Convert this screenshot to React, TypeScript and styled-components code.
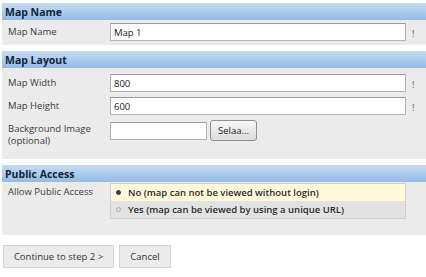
import React from 'react';
import styled, { createGlobalStyle } from 'styled-components';

const Global = createGlobalStyle`
  body {
    margin: 0;
    background: #ffffff;
    font-family: 'Open Sans', 'DejaVu Sans', sans-serif;
    color: #333;
  }
`;

const Page = styled.div`
  width: 426px;
  height: 277px;
  padding: 3px 0 0 2px;
  box-sizing: border-box;
  display: flex;
  flex-direction: column;
  gap: 6px;
`;

const Section = styled.section`
  display: flex;
  flex-direction: column;
`;

const Header = styled.div`
  height: 17px;
  padding-left: 3px;
  display: flex;
  align-items: center;
  background: linear-gradient(#c6dcf2, #94bbe5);
  color: #14243a;
  font-size: 10.5px;
  font-weight: 700;
`;

const Body = styled.div<{ $top: number; $bottom: number }>`
  background: #ebebeb;
  padding: ${(p) => p.$top}px 0 ${(p) => p.$bottom}px 6px;
  display: flex;
  flex-direction: column;
  gap: 5px;
`;

const Row = styled.div`
  display: grid;
  grid-template-columns: 102px 296px 1fr;
  align-items: start;
`;

const Label = styled.div`
  font-size: 9.5px;
  line-height: 12px;
  color: #3a3a3a;
  padding-top: 3px;
`;

const Field = styled.div`
  display: flex;
  align-items: center;
  gap: 3px;
`;

const Input = styled.div<{ $width?: number }>`
  width: ${(p) => (p.$width ? `${p.$width}px` : '100%')};
  height: 18px;
  box-sizing: border-box;
  background: #fff;
  border: 1px solid #b4b4b4;
  border-top-color: #9a9a9a;
  padding: 0 3px;
  display: flex;
  align-items: center;
  font-size: 9.5px;
  color: #222;
`;

const Mark = styled.div`
  font-size: 9px;
  color: #555;
  padding: 4px 0 0 6px;
`;

const BrowseButton = styled.div`
  height: 19px;
  padding: 0 7px;
  display: flex;
  align-items: center;
  border: 1px solid #8f8f8f;
  border-radius: 3px;
  background: linear-gradient(#f6f6f6, #dcdcdc);
  font-size: 9.5px;
  color: #222;
`;

const RadioBox = styled.div`
  border: 1px solid #cfcfcf;
  display: flex;
  flex-direction: column;
`;

const Option = styled.div<{ $selected?: boolean }>`
  height: 17px;
  display: flex;
  align-items: center;
  gap: 7px;
  padding-left: 5px;
  background: ${(p) => (p.$selected ? '#fff9d9' : '#e2e2e2')};
  font-size: 9.5px;
  font-weight: 600;
  color: #2a2a2a;
`;

const Dot = styled.span<{ $selected?: boolean }>`
  width: 5px;
  height: 5px;
  border-radius: 50%;
  box-sizing: border-box;
  background: ${(p) => (p.$selected ? '#3a3a3a' : 'transparent')};
  border: 1px solid ${(p) => (p.$selected ? '#3a3a3a' : '#a8a8a8')};
`;

const Actions = styled.div`
  display: flex;
  gap: 5px;
  padding: 4px 0 0 1px;
`;

const Button = styled.div<{ $width: number }>`
  width: ${(p) => p.$width}px;
  height: 23px;
  box-sizing: border-box;
  display: flex;
  align-items: center;
  justify-content: center;
  background: #ebebeb;
  border: 1px solid #d4d4d4;
  font-size: 9.5px;
  color: #333;
`;

export default function App() {
  return (
    <>
      <Global />
      <Page>
        <Section>
          <Header>Map Name</Header>
          <Body $top={3} $bottom={4}>
            <Row>
              <Label>Map Name</Label>
              <Input>Map 1</Input>
              <Mark>!</Mark>
            </Row>
          </Body>
        </Section>
        <Section>
          <Header>Map Layout</Header>
          <Body $top={6} $bottom={12}>
            <Row>
              <Label>Map Width</Label>
              <Input>800</Input>
              <Mark>!</Mark>
            </Row>
            <Row>
              <Label>Map Height</Label>
              <Input>600</Input>
              <Mark>!</Mark>
            </Row>
            <Row>
              <Label>
                Background Image
                <br />
                (optional)
              </Label>
              <Field>
                <Input $width={97} />
                <BrowseButton>Selaa...</BrowseButton>
              </Field>
            </Row>
          </Body>
        </Section>
        <Section>
          <Header>Public Access</Header>
          <Body $top={1} $bottom={16}>
            <Row>
              <Label>Allow Public Access</Label>
              <RadioBox>
                <Option $selected>
                  <Dot $selected />
                  No (map can not be viewed without login)
                </Option>
                <Option>
                  <Dot />
                  Yes (map can be viewed by using a unique URL)
                </Option>
              </RadioBox>
            </Row>
          </Body>
        </Section>
        <Actions>
          <Button $width={111}>Continue to step 2 &gt;</Button>
          <Button $width={52}>Cancel</Button>
        </Actions>
      </Page>
    </>
  );
}
